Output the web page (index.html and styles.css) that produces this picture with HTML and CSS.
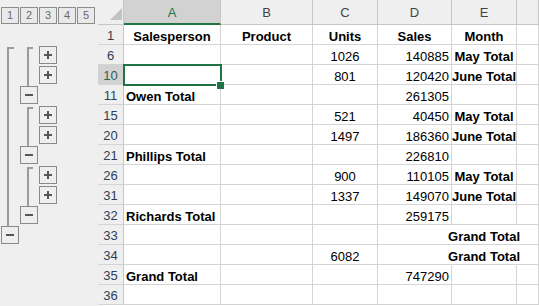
FILE: index.html
```html
<!DOCTYPE html>
<html lang="en">
<head>
  <meta charset="UTF-8">
  <title>Sales outline</title>
  <link rel="stylesheet" href="styles.css">
</head>
<body>

  <div class="app">
    <div class="outline">
      <div class="levels">
        <span class="level">1</span>
        <span class="level">2</span>
        <span class="level">3</span>
        <span class="level">4</span>
        <span class="level">5</span>
      </div>
      <svg class="groups" width="98" height="281" viewBox="0 25 98 281">
        <g fill="none" stroke="#9b9b9b" stroke-width="2">
          <path d="M14 48H8V227"/>
          <path d="M33 48H28V87"/>
          <path d="M33 108H28V147"/>
          <path d="M33 168H28V207"/>
        </g>
        <g fill="#eeeeee" stroke="#8a8a8a">
          <rect x="39.5" y="46.5" width="17" height="17"/>
          <rect x="39.5" y="66.5" width="17" height="17"/>
          <rect x="20.5" y="86.5" width="17" height="17"/>
          <rect x="39.5" y="106.5" width="17" height="17"/>
          <rect x="39.5" y="126.5" width="17" height="17"/>
          <rect x="20.5" y="146.5" width="17" height="17"/>
          <rect x="39.5" y="166.5" width="17" height="17"/>
          <rect x="39.5" y="186.5" width="17" height="17"/>
          <rect x="20.5" y="206.5" width="17" height="17"/>
          <rect x="1.5" y="226.5" width="17" height="17"/>
        </g>
        <g fill="none" stroke="#555555" stroke-width="2">
          <path d="M44 55H52M48 51V59"/>
          <path d="M44 75H52M48 71V79"/>
          <path d="M25 95H33"/>
          <path d="M44 115H52M48 111V119"/>
          <path d="M44 135H52M48 131V139"/>
          <path d="M25 155H33"/>
          <path d="M44 175H52M48 171V179"/>
          <path d="M44 195H52M48 191V199"/>
          <path d="M25 215H33"/>
          <path d="M6 235H14"/>
        </g>
      </svg>
    </div>

    <div class="sheet">
      <div class="corner"></div>
      <div class="col-head is-active">A</div>
      <div class="col-head">B</div>
      <div class="col-head">C</div>
      <div class="col-head">D</div>
      <div class="col-head">E</div>
      <div class="col-head"></div>

      <div class="row-head">1</div>
      <div class="cell center bold">Salesperson</div>
      <div class="cell center bold">Product</div>
      <div class="cell center bold">Units</div>
      <div class="cell center bold">Sales</div>
      <div class="cell center bold">Month</div>
      <div class="cell"></div>

      <div class="row-head">6</div>
      <div class="cell"></div>
      <div class="cell"></div>
      <div class="cell center">1026</div>
      <div class="cell right">140885</div>
      <div class="cell center bold">May Total</div>
      <div class="cell"></div>

      <div class="row-head is-active">10</div>
      <div class="cell selected"></div>
      <div class="cell"></div>
      <div class="cell center">801</div>
      <div class="cell right">120420</div>
      <div class="cell center bold">June Total</div>
      <div class="cell"></div>

      <div class="row-head">11</div>
      <div class="cell bold">Owen Total</div>
      <div class="cell"></div>
      <div class="cell"></div>
      <div class="cell right">261305</div>
      <div class="cell"></div>
      <div class="cell"></div>

      <div class="row-head">15</div>
      <div class="cell"></div>
      <div class="cell"></div>
      <div class="cell center">521</div>
      <div class="cell right">40450</div>
      <div class="cell center bold">May Total</div>
      <div class="cell"></div>

      <div class="row-head">20</div>
      <div class="cell"></div>
      <div class="cell"></div>
      <div class="cell center">1497</div>
      <div class="cell right">186360</div>
      <div class="cell center bold">June Total</div>
      <div class="cell"></div>

      <div class="row-head">21</div>
      <div class="cell bold">Phillips Total</div>
      <div class="cell"></div>
      <div class="cell"></div>
      <div class="cell right">226810</div>
      <div class="cell"></div>
      <div class="cell"></div>

      <div class="row-head">26</div>
      <div class="cell"></div>
      <div class="cell"></div>
      <div class="cell center">900</div>
      <div class="cell right">110105</div>
      <div class="cell center bold">May Total</div>
      <div class="cell"></div>

      <div class="row-head">31</div>
      <div class="cell"></div>
      <div class="cell"></div>
      <div class="cell center">1337</div>
      <div class="cell right">149070</div>
      <div class="cell center bold">June Total</div>
      <div class="cell"></div>

      <div class="row-head">32</div>
      <div class="cell bold">Richards Total</div>
      <div class="cell"></div>
      <div class="cell"></div>
      <div class="cell right">259175</div>
      <div class="cell"></div>
      <div class="cell"></div>

      <div class="row-head">33</div>
      <div class="cell"></div>
      <div class="cell"></div>
      <div class="cell"></div>
      <div class="cell no-grid"></div>
      <div class="cell center bold no-grid">Grand Total</div>
      <div class="cell"></div>

      <div class="row-head">34</div>
      <div class="cell"></div>
      <div class="cell"></div>
      <div class="cell center">6082</div>
      <div class="cell no-grid"></div>
      <div class="cell center bold no-grid">Grand Total</div>
      <div class="cell"></div>

      <div class="row-head">35</div>
      <div class="cell bold">Grand Total</div>
      <div class="cell"></div>
      <div class="cell"></div>
      <div class="cell right">747290</div>
      <div class="cell"></div>
      <div class="cell"></div>

      <div class="row-head">36</div>
      <div class="cell"></div>
      <div class="cell"></div>
      <div class="cell"></div>
      <div class="cell"></div>
      <div class="cell"></div>
      <div class="cell"></div>
    </div>
  </div>

</body>
</html>
```

FILE: styles.css
```css
* {
  box-sizing: border-box;
}

body {
  margin: 0;
  font-family: "Liberation Sans", Arial, sans-serif;
  background-color: #fff;
}

.app {
  display: flex;
  width: 539px;
  height: 306px;
  overflow: hidden;
}

/* outline pane on the left */
.outline {
  width: 98px;
  flex: none;
  background-color: #efefef;
}

.levels {
  display: flex;
  gap: 1px;
  height: 25px;
  padding: 7px 0 0 1px;
}

.level {
  width: 18px;
  height: 17px;
  border: 1px solid #8c8c8c;
  background-color: #e9e9e9;
  color: #6a6a6a;
  font-size: 11px;
  line-height: 15px;
  text-align: center;
}

.groups {
  display: block;
}

/* the grid itself */
.sheet {
  flex: 1;
  display: grid;
  grid-template-columns: 26px 97px 92px 65px 74px 65px 1fr;
  grid-template-rows: 25px;
  grid-auto-rows: 20px;
  font-size: 13px;
}

.corner {
  position: relative;
  background-color: #efefef;
  border-right: 1px solid #c6c6c6;
  border-bottom: 1px solid #c6c6c6;
}

.corner::after {
  content: "";
  position: absolute;
  right: 1px;
  bottom: 4px;
  width: 12px;
  height: 12px;
  background-color: #c3c3c3;
  clip-path: polygon(100% 0, 100% 100%, 0 100%);
}

.col-head {
  background-color: #efefef;
  border-right: 1px solid #c6c6c6;
  border-bottom: 1px solid #c6c6c6;
  color: #444;
  line-height: 14px;
  padding-top: 6px;
  text-align: center;
}

.col-head.is-active {
  background-color: #d2d2d2;
  color: #217346;
  border-bottom: 2px solid #217346;
}

.row-head {
  background-color: #efefef;
  border-right: 1px solid #c6c6c6;
  border-bottom: 1px solid #d4d4d4;
  color: #2e4057;
  line-height: 14px;
  padding-top: 4px;
  text-align: center;
}

.row-head.is-active {
  background-color: #d2d2d2;
  color: #2f5f55;
}

.cell {
  display: flex;
  padding: 5px 2px 0;
  border-right: 1px solid #d4d4d4;
  border-bottom: 1px solid #d4d4d4;
  color: #000;
  line-height: 14px;
  white-space: nowrap;
  min-width: 0;
}

.cell.center {
  justify-content: center;
}

.cell.right {
  justify-content: flex-end;
}

.cell.bold {
  font-weight: bold;
}

.cell.no-grid {
  border-right-color: transparent;
}

.cell.selected {
  position: relative;
}

.cell.selected::after {
  content: "";
  position: absolute;
  left: -1px;
  top: -1px;
  right: -2px;
  bottom: -2px;
  border: 2px solid #217346;
}

.cell.selected::before {
  content: "";
  position: absolute;
  right: -4px;
  bottom: -5px;
  width: 7px;
  height: 7px;
  background-color: #217346;
  border-left: 1px solid #fff;
  border-top: 1px solid #fff;
  z-index: 1;
}
```
